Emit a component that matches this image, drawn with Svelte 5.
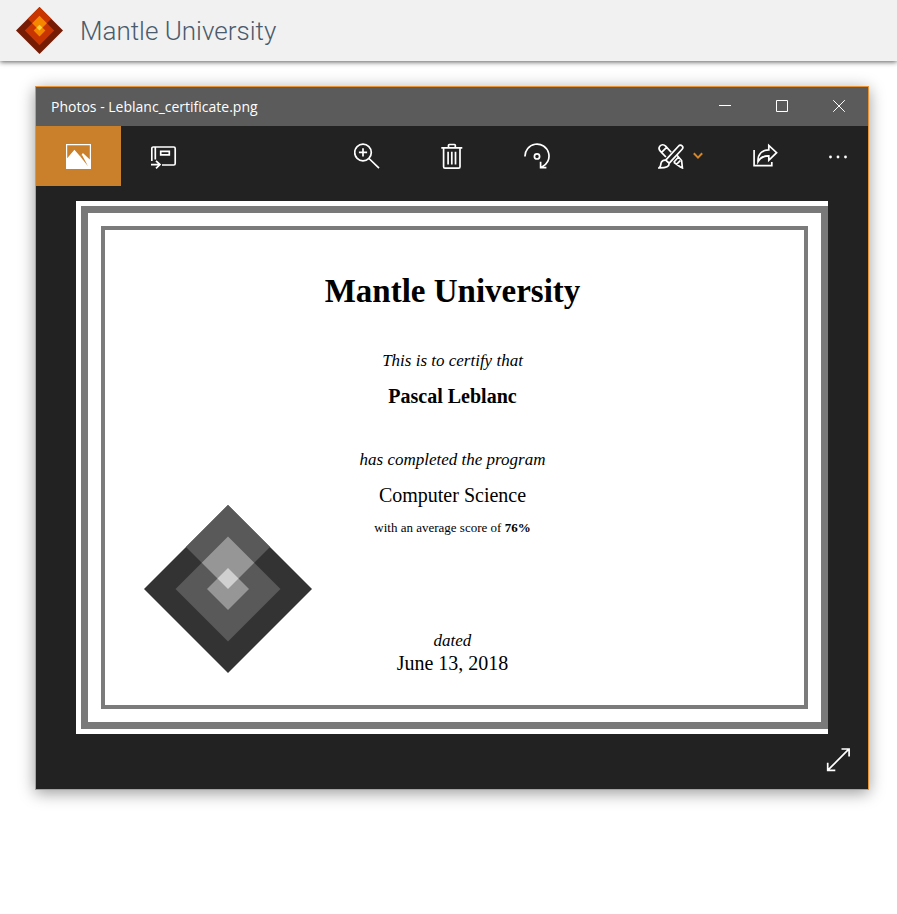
<script>
  const certificate = {
    school: 'Mantle University',
    student: 'Pascal Leblanc',
    program: 'Computer Science',
    score: '76%',
    date: 'June 13, 2018'
  };
  const brandTones = ['#761b04', '#c83500', '#f48600', '#ffd23c'];
  const greyTones = ['#333333', '#595959', '#969696', '#d0d0d0'];
</script>

{#snippet diamond(tones)}
  <svg viewBox="0 0 168 168" aria-hidden="true">
    <path d="M84 0 168 84 84 168 0 84z" fill={tones[0]} />
    <path d="M84 0 126 42 84 84 42 42z" fill={tones[1]} />
    <path d="M84 31.5 136.5 84 84 136.5 31.5 84z" fill={tones[1]} />
    <path d="M84 31.5 110.25 57.75 84 84 57.75 57.75z" fill={tones[2]} />
    <path d="M84 63 105 84 84 105 63 84z" fill={tones[2]} />
    <path d="M84 63 94.5 73.5 84 84 73.5 73.5z" fill={tones[3]} />
  </svg>
{/snippet}

<header class="site">
  <div class="logo">{@render diamond(brandTones)}</div>
  <span class="brand">{certificate.school}</span>
</header>

<main>
  <section class="window" aria-label="Photos">
    <div class="titlebar">
      <span class="title">Photos - Leblanc_certificate.png</span>
      <button class="frame-btn" aria-label="Minimize">
        <svg width="13" height="13" viewBox="0 0 13 13"><path d="M0 5.5h12" /></svg>
      </button>
      <button class="frame-btn" aria-label="Maximize">
        <svg width="13" height="13" viewBox="0 0 13 13"><path d="M.5.5h11v11H.5z" /></svg>
      </button>
      <button class="frame-btn" aria-label="Close">
        <svg width="13" height="13" viewBox="0 0 13 13"><path d="M.2.2l11.6 11.6M11.8.2.2 11.8" /></svg>
      </button>
    </div>

    <nav class="toolbar">
      <button class="tool active" aria-label="Photo">
        <svg width="26" height="26" viewBox="0 0 26 26">
          <path fill="#fff" stroke="none" fill-rule="evenodd" d="M0 1h25v25H0zM1.2 2.2V15.2L8.4 6.8l5.9 6.6 2.6-3.4 6.9 6.6V2.2z" />
          <path fill="#ca802a" stroke="none" d="M14.3 13.4l1.5-1.9L22 23.3z" />
        </svg>
      </button>
      <button class="tool" aria-label="Add to album">
        <svg width="26" height="26" viewBox="0 0 26 26">
          <path d="M.8 18V5.3q0-1.3 1.3-1.3h20.7q1.4 0 1.4 1.4v15.2q0 1.4-1.4 1.4H11M4.3 4v12.5M9.7 8.3h8.6v3.5H9.7zM0 21.6h8.6M5 17.8l4 3.8-4 3.8" />
        </svg>
      </button>
      <div class="center-tools">
        <button class="tool" aria-label="Zoom">
          <svg width="26" height="26" viewBox="0 0 26 26">
            <circle cx="9" cy="9.5" r="8.3" /><path d="M15 15.5l10 9.7M9 5.3v8.2M4.9 9.4h8.2" />
          </svg>
        </button>
        <button class="tool" aria-label="Delete">
          <svg width="26" height="26" viewBox="0 0 26 26">
            <path d="M2.3 4.9h21M9.5 4.8V2.3q0-.8.8-.8h5.2q.8 0 .8.8v2.5M4.6 4.9v18.8q0 1.4 1.4 1.4h13.6q1.4 0 1.4-1.4V4.9M9.1 8.7v12.8M12.8 8.7v12.8M16.5 8.7v12.8" />
          </svg>
        </button>
        <button class="tool" aria-label="Rotate">
          <svg width="26" height="26" viewBox="0 0 26 26">
            <path d="M1 13.5A12 12 0 1 1 17.5 24.2M16.6 18.8v5.8h5.8" /><circle cx="13" cy="13.4" r="2.6" />
          </svg>
        </button>
      </div>
      <button class="tool edit" aria-label="Edit and create">
        <svg width="26" height="26" viewBox="0 0 26 26">
          <path d="M13.2 9.3 7.6 3.1C5.8 1.2 3.3 1.5 2 3S.8 6.5 2.3 8.1l5.6 5.9M15.8 19.2l6.6 4.7 2 1-.8-7.4-4.6-5.2M15.8 19.2l4.5-4.9M8.6 4.3 3.6 9.4M18.2 21.6l4-4" />
          <path d="M7.7 17.1 20.4 3.2c2.5-2.7 6 .6 3.5 3.3L11.2 20.2zM7.7 17.1l3.5 3.1C11.2 23.5 9 25 .9 24.9c2-1.2 1.8-2.6 2-4.2.4-2.9 2.8-3.9 4.8-3.6z" />
        </svg>
        <svg class="chevron" width="10" height="8" viewBox="0 0 10 8"><path d="M.8 1.3 5 5.6l4.2-4.3" /></svg>
      </button>
      <button class="tool" aria-label="Share">
        <svg width="26" height="26" viewBox="0 0 26 26">
          <path d="M1.1 7.1v15.6h17.7v-3.8" />
          <path d="M15.8 2.5v4.4C8.9 7.1 4.6 11 5 18.7c2.5-4.5 5.8-6 10.8-5.9v4.5l7.8-7.6z" />
        </svg>
      </button>
      <button class="tool more" aria-label="More">
        <svg width="26" height="26" viewBox="0 0 26 26">
          <g fill="#fff" stroke="none"><circle cx="5.5" cy="14" r="1.4" /><circle cx="13" cy="14" r="1.4" /><circle cx="20.5" cy="14" r="1.4" /></g>
        </svg>
      </button>
    </nav>

    <div class="viewer">
      <article class="certificate">
        <div class="outer">
          <div class="inner">
            <div class="seal">{@render diamond(greyTones)}</div>
            <div class="wording">
              <h1>{certificate.school}</h1>
              <p class="phrase first">This is to certify that</p>
              <p class="value"><b>{certificate.student}</b></p>
              <p class="phrase second">has completed the program</p>
              <p class="value">{certificate.program}</p>
              <p class="score">with an average score of <b>{certificate.score}</b></p>
              <p class="phrase dated">dated</p>
              <p class="date">{certificate.date}</p>
            </div>
          </div>
        </div>
      </article>
    </div>

    <div class="footer">
      <button class="tool more" aria-label="Full screen">
        <svg width="26" height="26" viewBox="0 0 26 26">
          <path d="M2.9 23.2 23.8 2.2M16.5 2h7.6v7.6M2.7 15.8v7.6h7.6" />
        </svg>
      </button>
    </div>
  </section>
</main>

<style>
  :global(body) {
    margin: 0;
    background: #fff;
  }
  .site {
    display: flex;
    align-items: center;
    gap: 17px;
    height: 61px;
    padding: 0 16px;
    background: #f1f1f1;
    box-shadow: 0 1px 5px rgba(0, 0, 0, 0.65);
    position: relative;
  }
  .logo {
    width: 47px;
    height: 47px;
  }
  .logo svg,
  .seal svg {
    display: block;
    width: 100%;
    height: 100%;
  }
  .brand {
    font: 300 26px/30px Roboto, sans-serif;
    color: #4a5b6d;
  }
  main {
    padding: 25px 28px 40px 35px;
  }
  .window {
    border: 1px solid #e8953a;
    background: #222;
    box-shadow: 0 3px 15px rgba(0, 0, 0, 0.4);
  }
  .titlebar {
    display: flex;
    align-items: center;
    height: 39px;
    padding-left: 15px;
    background: #5b5b5b;
    color: #fff;
  }
  .title {
    flex: 1;
    font: 14px/20px 'Open Sans', sans-serif;
  }
  button {
    display: flex;
    align-items: center;
    justify-content: center;
    margin: 0;
    padding: 0;
    border: 0;
    background: none;
  }
  button svg {
    fill: none;
    stroke: #fff;
    stroke-width: 1.7;
  }
  .frame-btn {
    width: 57px;
    height: 39px;
  }
  .frame-btn svg {
    stroke-width: 1;
  }
  .toolbar {
    display: flex;
    height: 60px;
  }
  .tool {
    width: 85px;
    height: 60px;
  }
  .tool.active {
    background: #ca802a;
  }
  .center-tools {
    display: flex;
    flex: 1;
    justify-content: center;
    padding-left: 60px;
  }
  .edit {
    gap: 9px;
  }
  button .chevron {
    stroke: #d5852a;
    stroke-width: 2;
  }
  .tool.more {
    width: 60px;
  }
  .viewer {
    padding: 15px 40px 0;
  }
  .certificate {
    padding: 5px 0 5px 5px;
    background: #fff;
    color: #000;
    font-family: 'Liberation Serif', serif;
  }
  .outer {
    padding: 13px;
    border: 7px solid #797979;
  }
  .inner {
    display: grid;
    grid-template-columns: 1fr auto 1fr;
    padding: 41px 4px 30px 0;
    border: 4px solid #7b7b7b;
  }
  .seal {
    align-self: end;
    justify-self: center;
    width: 168px;
    height: 168px;
    margin: 0 0 2px 26px;
  }
  .wording {
    text-align: center;
  }
  h1,
  p {
    margin: 0;
  }
  h1 {
    font-size: 33px;
    line-height: 40px;
  }
  .phrase {
    font-size: 17px;
    line-height: 20px;
    font-style: italic;
  }
  .first {
    margin-top: 40px;
  }
  .second {
    margin-top: 42px;
  }
  .value,
  .date {
    font-size: 20px;
    line-height: 24px;
  }
  .value,
  .score {
    margin-top: 13px;
  }
  .score {
    font-size: 13px;
    line-height: 16px;
  }
  .dated {
    margin-top: 95px;
  }
  .footer {
    display: flex;
    justify-content: flex-end;
  }
  .footer .tool {
    height: 55px;
    padding-bottom: 4px;
  }
</style>
